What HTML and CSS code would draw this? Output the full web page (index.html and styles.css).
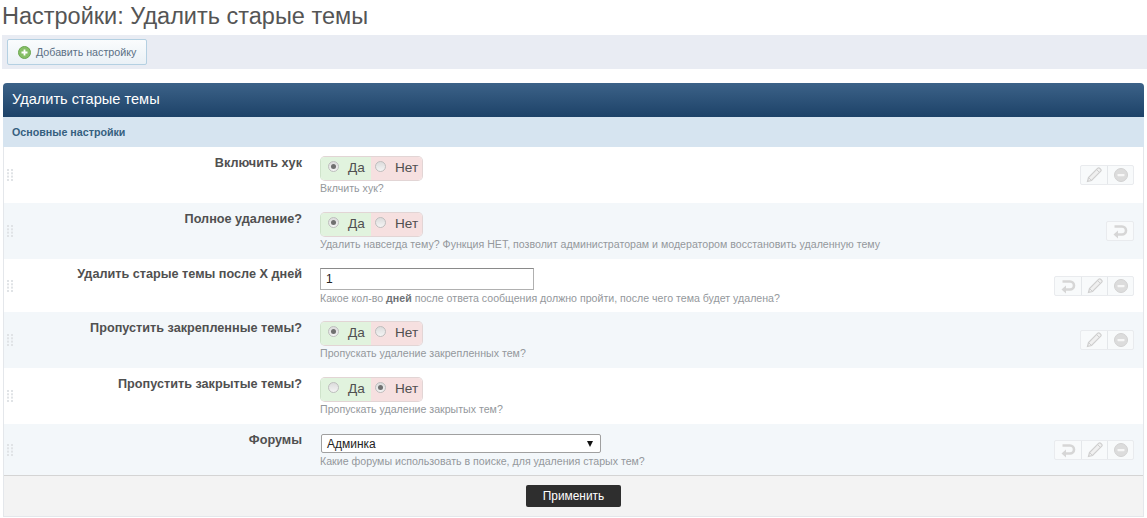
FILE: index.html
```html
<!DOCTYPE html>
<html lang="ru">
<head>
<meta charset="utf-8">
<title>Настройки</title>
<link rel="stylesheet" href="styles.css">
</head>
<body>
<svg class="defs" width="0" height="0" aria-hidden="true">
  <symbol id="i-edit" viewBox="0 0 18 18"><path d="M2.5 15.5l1-4L12.8 2.2a1.3 1.3 0 0 1 1.8 0l1.2 1.2a1.3 1.3 0 0 1 0 1.8L6.5 14.5z" fill="#f0f0f0" stroke="#cfcfcf" stroke-width="1.2"/><path d="M3.5 11.5l3 3M11.5 3.5l3 3" stroke="#cfcfcf" fill="none"/></symbol>
  <symbol id="i-del" viewBox="0 0 18 18"><circle cx="9" cy="9" r="6.5" fill="#dcdcdc" stroke="#d2d2d2"/><rect x="5.5" y="8" width="7" height="2.2" rx=".6" fill="#f7f7f7"/></symbol>
  <symbol id="i-undo" viewBox="0 0 18 18"><path d="M3.5 4.5h7.5a4 4 0 0 1 0 8H5" fill="none" stroke="#d6d6d6" stroke-width="2.6"/><path d="M7 8.5L2.5 12.5l4.5 4z" fill="#d6d6d6"/></symbol>
  <symbol id="i-grip" viewBox="0 0 7 12"><g fill="#e0e3e6"><rect x="0" y="0" width="2" height="2"/><rect x="4" y="0" width="2" height="2"/><rect x="0" y="3.3" width="2" height="2"/><rect x="4" y="3.3" width="2" height="2"/><rect x="0" y="6.6" width="2" height="2"/><rect x="4" y="6.6" width="2" height="2"/><rect x="0" y="10" width="2" height="2"/><rect x="4" y="10" width="2" height="2"/></g></symbol>
</svg>

<h1 class="page-title">Настройки: Удалить старые темы</h1>

<div class="toolbar">
  <a class="tool-btn" href="#">
    <svg class="plus" width="13" height="13" viewBox="0 0 13 13"><circle cx="6.5" cy="6.5" r="6" fill="#86bf66" stroke="#6aa64f"/><path d="M6.5 3.5v6M3.5 6.5h6" stroke="#fff" stroke-width="1.8"/></svg>
    Добавить настройку
  </a>
</div>

<form class="panel">
  <h2 class="panel-head">Удалить старые темы</h2>
  <h3 class="panel-sub">Основные настройки</h3>

  <div class="row">
    <svg class="grip"><use href="#i-grip"/></svg>
    <div class="label">Включить хук</div>
    <div class="control">
      <div class="yesno"><span class="yes"><i class="radio on"></i>Да</span><span class="no"><i class="radio"></i>Нет</span></div>
      <div class="desc">Вклчить хук?</div>
    </div>
    <div class="actions"><span class="act"><svg><use href="#i-edit"/></svg></span><span class="act"><svg><use href="#i-del"/></svg></span></div>
  </div>

  <div class="row alt">
    <svg class="grip"><use href="#i-grip"/></svg>
    <div class="label">Полное удаление?</div>
    <div class="control">
      <div class="yesno"><span class="yes"><i class="radio on"></i>Да</span><span class="no"><i class="radio"></i>Нет</span></div>
      <div class="desc">Удалить навсегда тему? Функция НЕТ, позволит администраторам и модератором восстановить удаленную тему</div>
    </div>
    <div class="actions"><span class="act"><svg><use href="#i-undo"/></svg></span></div>
  </div>

  <div class="row short">
    <svg class="grip"><use href="#i-grip"/></svg>
    <div class="label">Удалить старые темы после X дней</div>
    <div class="control">
      <input class="text" type="text" value="1">
      <div class="desc">Какое кол-во <b>дней</b> после ответа сообщения должно пройти, после чего тема будет удалена?</div>
    </div>
    <div class="actions"><span class="act"><svg><use href="#i-undo"/></svg></span><span class="act"><svg><use href="#i-edit"/></svg></span><span class="act"><svg><use href="#i-del"/></svg></span></div>
  </div>

  <div class="row alt">
    <svg class="grip"><use href="#i-grip"/></svg>
    <div class="label">Пропустить закрепленные темы?</div>
    <div class="control">
      <div class="yesno"><span class="yes"><i class="radio on"></i>Да</span><span class="no"><i class="radio"></i>Нет</span></div>
      <div class="desc">Пропускать удаление закрепленных тем?</div>
    </div>
    <div class="actions"><span class="act"><svg><use href="#i-edit"/></svg></span><span class="act"><svg><use href="#i-del"/></svg></span></div>
  </div>

  <div class="row">
    <svg class="grip"><use href="#i-grip"/></svg>
    <div class="label">Пропустить закрытые темы?</div>
    <div class="control">
      <div class="yesno"><span class="yes"><i class="radio"></i>Да</span><span class="no"><i class="radio on"></i>Нет</span></div>
      <div class="desc">Пропускать удаление закрытых тем?</div>
    </div>
  </div>

  <div class="row alt last">
    <svg class="grip"><use href="#i-grip"/></svg>
    <div class="label">Форумы</div>
    <div class="control">
      <div class="select"><span>Админка</span><i class="arrow"></i></div>
      <div class="desc">Какие форумы использовать в поиске, для удаления старых тем?</div>
    </div>
    <div class="actions"><span class="act"><svg><use href="#i-undo"/></svg></span><span class="act"><svg><use href="#i-edit"/></svg></span><span class="act"><svg><use href="#i-del"/></svg></span></div>
  </div>

  <div class="panel-foot"><button class="apply" type="button">Применить</button></div>
</form>
</body>
</html>
```

FILE: styles.css
```css
* { box-sizing: border-box; }
html, body { margin: 0; padding: 0; }
body {
  background: #fff;
  color: #333;
  font-family: "Liberation Sans", Arial, sans-serif;
  font-size: 12px;
  height: 518px;
  overflow: hidden;
}
.defs { position: absolute; }

.page-title {
  margin: 0;
  padding: 2px 0 0 2px;
  height: 35px;
  font-size: 23.5px;
  line-height: 28px;
  font-weight: 400;
  color: #555;
}

.toolbar {
  height: 34px;
  margin-left: 2px;
  padding: 4px 5px;
  background: #e9ecf3;
}
.tool-btn {
  display: inline-flex;
  align-items: center;
  gap: 5px;
  width: 140px;
  height: 26px;
  padding-left: 10px;
  border: 1px solid #b4d0e2;
  border-radius: 2px;
  background: linear-gradient(#fafcfd, #eaf1f6);
  color: #5a6f84;
  font-size: 10.7px;
  text-decoration: none;
}

.panel {
  margin: 14px 3px 0 3px;
  border: 1px solid #e4e7eb;
  border-top: 0;
  border-radius: 4px 4px 0 0;
  background: #fff;
}
.panel-head {
  margin: 0 -1px;
  height: 34px;
  padding-left: 9px;
  border-radius: 4px 4px 0 0;
  background: linear-gradient(#3c6288, #1d4268);
  color: #fff;
  font-size: 14.6px;
  font-weight: 400;
  line-height: 33px;
}
.panel-sub {
  margin: 0 -1px;
  height: 30px;
  padding-left: 9px;
  background: #d6e4f0;
  color: #35607f;
  font-size: 10.7px;
  font-weight: 700;
  line-height: 30px;
}

.row {
  display: flex;
  align-items: flex-start;
  position: relative;
  height: 56px;
  padding-top: 9px;
}
.row.short { height: 53px; }
.row.last { height: 51px; padding-top: 10px; }
.alt { background: #f3f7fa; }

.grip {
  position: absolute;
  left: 3px;
  top: 0;
  bottom: 0;
  margin: auto 0;
  width: 7px;
  height: 12px;
}
.label {
  width: 298px;
  flex: none;
  margin-top: -1px;
  text-align: right;
  font-size: 12.66px;
  font-weight: 700;
  line-height: 16px;
  color: #505050;
}
.short .label, .last .label { margin-top: -2px; }
.control {
  margin-left: 18px;
  flex: 1;
}
.yesno {
  display: flex;
  width: 103px;
  height: 25px;
  border: 1px solid #e2d5d5;
  border-left-color: #cfe3cb;
  border-radius: 5px;
  overflow: hidden;
  font-size: 13.6px;
  line-height: 23px;
  color: #505050;
}
.yes, .no {
  display: flex;
  align-items: center;
  padding-bottom: 2px;
}
.yes { width: 50px; background: #e1f3de; padding-left: 7px; gap: 9px; }
.no { flex: 1; background: #f6e0e0; padding-left: 4px; gap: 9px; }
.radio {
  display: block;
  position: relative;
  top: -1px;
  flex: none;
  width: 11px;
  height: 11px;
  border: 1px solid #bdbdbd;
  border-radius: 50%;
  background: linear-gradient(#dcdcdc, #f4f4f4);
}
.radio.on::after {
  content: "";
  position: absolute;
  left: 2px;
  top: 2px;
  width: 5px;
  height: 5px;
  border-radius: 50%;
  background: #707070;
}
.desc {
  margin-top: 1px;
  font-size: 10.62px;
  line-height: 14px;
  color: #94989c;
}
.yesno + .desc { margin-top: 0; }
.desc b { color: #6f7276; }

.text {
  display: block;
  width: 214px;
  height: 22px;
  padding: 0 5px;
  border: 1px solid #b0b0b0;
  border-top-color: #8a8a8a;
  background: #fff;
  color: #222;
  font: 12px "Liberation Sans", Arial, sans-serif;
}

.select {
  display: flex;
  align-items: center;
  justify-content: space-between;
  width: 280px;
  height: 19px;
  margin-left: 1px;
  padding: 0 7px 0 5px;
  border: 1px solid #a0a0a0;
  border-radius: 2px;
  background: #fff;
  color: #222;
  font-size: 12px;
}
.arrow {
  width: 0;
  height: 0;
  border-left: 3px solid transparent;
  border-right: 3px solid transparent;
  border-top: 6px solid #111;
}

.actions {
  position: absolute;
  right: 9px;
  top: 0;
  bottom: 0;
  margin: auto 0;
  display: flex;
  height: 20px;
  border: 1px solid #e9ebee;
  border-radius: 2px;
  background: #f8fafb;
}
.act {
  display: flex;
  align-items: center;
  justify-content: center;
  width: 26px;
  height: 18px;
}
.act + .act { border-left: 1px solid #e4e7ea; }
.act svg { width: 18px; height: 18px; display: block; }

.panel-foot {
  display: flex;
  justify-content: center;
  height: 41px;
  padding-top: 9px;
  border-top: 1px solid #d4d4d4;
  background: #f3f3f3;
}
.apply {
  width: 95px;
  height: 22px;
  padding: 0;
  border: 0;
  border-radius: 2px;
  background: #2e2e2e;
  color: #fff;
  font: 11.9px "Liberation Sans", Arial, sans-serif;
}
```
